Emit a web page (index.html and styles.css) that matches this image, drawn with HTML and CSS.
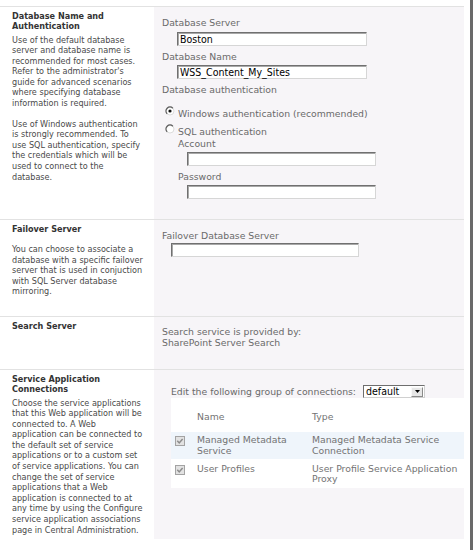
FILE: index.html
```html
<!DOCTYPE html>
<html>
<head>
<meta charset="utf-8">
<link rel="stylesheet" href="styles.css">
</head>
<body>
<div class="frame">
  <div class="form">
    <div class="section sec-db">
      <div class="sec-left">
        <div class="heading">Database Name and<br>Authentication</div>
        <p class="desc">Use of the default database<br>server and database name is<br>recommended for most cases.<br>Refer to the administrator's<br>guide for advanced scenarios<br>where specifying database<br>information is required.</p>
        <p class="desc desc-gap">Use of Windows authentication<br>is strongly recommended. To<br>use SQL authentication, specify<br>the credentials which will be<br>used to connect to the<br>database.</p>
      </div>
      <div class="sec-right">
        <div class="label">Database Server</div>
        <div class="field field-main">Boston</div>
        <div class="label label-next">Database Name</div>
        <div class="field field-main field-tight">WSS_Content_My_Sites</div>
        <div class="label label-next">Database authentication</div>
        <div class="radio-row radio-first">
          <svg class="radio" width="10" height="10" viewBox="0 0 10 10"><circle cx="5" cy="5" r="4" fill="#fff" stroke="#dcdcdc" stroke-width="1"/><path d="M2.17 7.83 A4 4 0 0 1 7.83 2.17" fill="none" stroke="#5f5f5f" stroke-width="1.3"/><circle cx="5" cy="5" r="1.6" fill="#111"/></svg>
          <span>Windows authentication (recommended)</span>
        </div>
        <div class="radio-row radio-second">
          <svg class="radio" width="10" height="10" viewBox="0 0 10 10"><circle cx="5" cy="5" r="4" fill="#fff" stroke="#dcdcdc" stroke-width="1"/><path d="M2.17 7.83 A4 4 0 0 1 7.83 2.17" fill="none" stroke="#5f5f5f" stroke-width="1.3"/></svg>
          <span>SQL authentication</span>
        </div>
        <div class="sql-fields">
          <div class="label">Account</div>
          <div class="field field-sub"></div>
          <div class="label label-next">Password</div>
          <div class="field field-sub"></div>
        </div>
      </div>
    </div>

    <div class="section sec-failover">
      <div class="sec-left">
        <div class="heading">Failover Server</div>
        <p class="desc desc-gap">You can choose to associate a<br>database with a specific failover<br>server that is used in conjuction<br>with SQL Server database<br>mirroring.</p>
      </div>
      <div class="sec-right">
        <div class="label">Failover Database Server</div>
        <div class="field field-failover"></div>
      </div>
    </div>

    <div class="section sec-search">
      <div class="sec-left">
        <div class="heading">Search Server</div>
      </div>
      <div class="sec-right">
        <div class="plain">Search service is provided by:<br>SharePoint Server Search</div>
      </div>
    </div>

    <div class="section sec-service">
      <div class="sec-left">
        <div class="heading">Service Application<br>Connections</div>
        <p class="desc">Choose the service applications<br>that this Web application will be<br>connected to. A Web<br>application can be connected to<br>the default set of service<br>applications or to a custom set<br>of service applications. You can<br>change the set of service<br>applications that a Web<br>application is connected to at<br>any time by using the Configure<br>service application associations<br>page in Central Administration.</p>
      </div>
      <div class="sec-right">
        <div class="edit-row">
          <span>Edit the following group of connections:</span>
          <div class="select">
            <span class="select-value">default</span>
            <span class="select-btn"><svg width="5" height="3" viewBox="0 0 5 3"><path d="M0 0 H5 L2.5 3 Z" fill="#000"/></svg></span>
          </div>
        </div>
        <div class="conn-table">
          <div class="conn-row conn-head">
            <div></div>
            <div>Name</div>
            <div>Type</div>
          </div>
          <div class="conn-row conn-alt">
            <div class="cell-check"><svg width="10" height="10" viewBox="0 0 10 10"><rect x="0.5" y="0.5" width="9" height="9" fill="#e2e2e2" stroke="#a3a3a3"/><path d="M2.3 4.8 L4.2 6.9 L7.6 2.9" fill="none" stroke="#8c8c8c" stroke-width="1.5"/></svg></div>
            <div>Managed Metadata<br>Service</div>
            <div>Managed Metadata Service<br>Connection</div>
          </div>
          <div class="conn-row conn-last">
            <div class="cell-check"><svg width="10" height="10" viewBox="0 0 10 10"><rect x="0.5" y="0.5" width="9" height="9" fill="#e2e2e2" stroke="#a3a3a3"/><path d="M2.3 4.8 L4.2 6.9 L7.6 2.9" fill="none" stroke="#8c8c8c" stroke-width="1.5"/></svg></div>
            <div>User Profiles</div>
            <div>User Profile Service Application<br>Proxy</div>
          </div>
        </div>
      </div>
    </div>
  </div>
</div>
</body>
</html>
```

FILE: styles.css
```css
html, body {
  margin: 0;
  padding: 0;
  background: #ffffff;
}

.frame {
  width: 470px;
  height: 546px;
  border-right: 3px solid #6a6a6a;
  border-bottom: 3px solid #6a6a6a;
  background: #ffffff;
  padding-top: 6px;
  box-sizing: content-box;
}

.form {
  width: 464px;
}

.section {
  display: grid;
  grid-template-columns: 154px 310px;
  border-top: 1px solid #e2e2e2;
  box-sizing: border-box;
}

.sec-db { height: 213px; }
.sec-failover { height: 97px; }
.sec-search { height: 53px; }
.sec-service { height: 170px; }

.sec-left {
  padding: 3.5px 4px 0 12px;
  font-family: "DejaVu Sans Condensed", "DejaVu Sans", sans-serif;
  font-size: 9px;
  color: #4a4a4a;
}

.heading {
  font-weight: bold;
  line-height: 10.5px;
  color: #333333;
}

.desc {
  margin: 3px 0 0 0;
  line-height: 10.6px;
}

.desc-gap {
  margin-top: 10px;
}

.sec-right {
  background: #f7f5f8;
  padding: 10px 0 0 8px;
  font-family: "DejaVu Sans", sans-serif;
  font-size: 9.3px;
  color: #6a6a6a;
}

.label {
  line-height: 12px;
  white-space: nowrap;
}

.label-next {
  margin-top: 5px;
}

.field {
  box-sizing: border-box;
  height: 14px;
  margin: 3px 0 0 0;
  padding: 0 2px;
  border: 1px solid;
  border-color: #707070 #d6d6d6 #d6d6d6 #707070;
  box-shadow: inset 1px 1px 0 #a8a8a8;
  background: #ffffff;
  font-family: "DejaVu Sans Condensed", "DejaVu Sans", sans-serif;
  font-size: 10.5px;
  line-height: 12px;
  color: #000000;
  white-space: nowrap;
}

.field-main {
  width: 190px;
  margin-left: 15px;
}

.field-tight {
  margin-top: 2px;
}

.field-sub {
  width: 189px;
  margin-top: 2px;
  margin-left: 9px;
}

.field-failover {
  width: 188px;
  margin-top: 1px;
  margin-left: 9px;
}

.radio-row {
  display: flex;
  align-items: flex-start;
  line-height: 12px;
  white-space: nowrap;
}

.radio-first { margin-top: 12px; }
.radio-second { margin-top: 6px; }

.radio {
  display: block;
  margin: -2px 3px 0 3px;
  flex: none;
}

.sql-fields {
  margin-left: 16px;
}

.plain {
  line-height: 10.5px;
}

.edit-row {
  display: flex;
  align-items: center;
  height: 13px;
  margin: 5px 0 0 9px;
  white-space: nowrap;
  gap: 7px;
}

.select {
  display: flex;
  align-items: center;
  box-sizing: border-box;
  width: 62px;
  height: 13px;
  border: 1px solid;
  border-color: #6e6e6e #d0d0d0 #d0d0d0 #6e6e6e;
  background: #ffffff;
}

.select-value {
  flex: 1;
  padding-left: 2px;
  font-family: "DejaVu Sans Condensed", "DejaVu Sans", sans-serif;
  font-size: 10.5px;
  line-height: 11px;
  color: #000000;
}

.select-btn {
  display: flex;
  align-items: center;
  justify-content: center;
  width: 12px;
  height: 10px;
  margin-right: 1px;
  box-sizing: border-box;
  background: #e6e6e6;
  border: 1px solid;
  border-color: #f8f8f8 #8a8a8a #8a8a8a #f8f8f8;
}

.select-btn svg {
  display: block;
}

.conn-table {
  margin-left: 9px;
  background: #ffffff;
  color: #737373;
  line-height: 10.6px;
}

.conn-row {
  display: grid;
  grid-template-columns: 26px 115px 1fr;
  white-space: nowrap;
}

.conn-head {
  padding: 14px 0 9px 0;
}

.conn-alt {
  background: #eff5fb;
  padding: 3.5px 0 2.3px 0;
}

.conn-last {
  padding: 5px 0 3px 0;
}

.cell-check {
  padding: 1px 0 0 4px;
}

.cell-check svg {
  display: block;
}
```
